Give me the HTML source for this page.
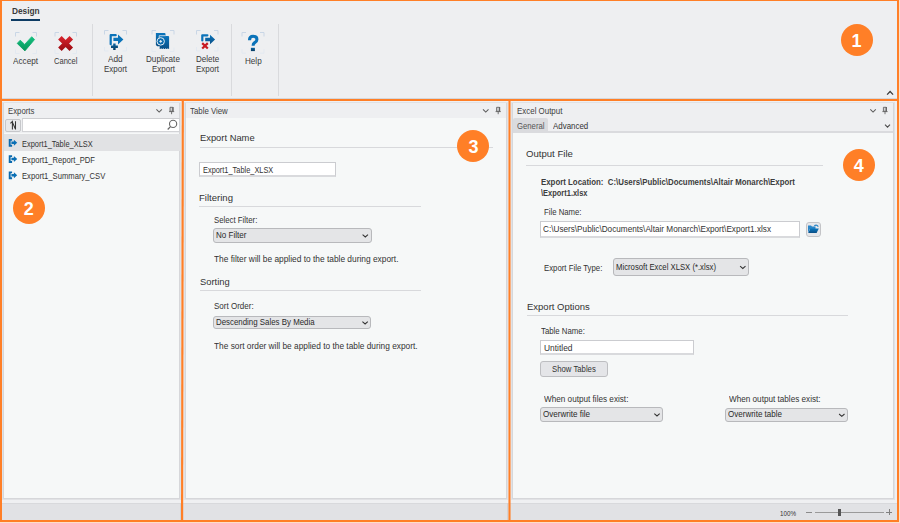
<!DOCTYPE html><html><head><meta charset="utf-8"><style>html,body{margin:0;padding:0;width:900px;height:523px;overflow:hidden;position:relative;font-family:"Liberation Sans",sans-serif;}</style></head><body>
<div style="position:absolute;left:0px;top:0px;width:900px;height:99px;background:#eeeff1;"></div>
<div style="position:absolute;left:0px;top:98px;width:900px;height:1px;background:#d5d6da;"></div>
<div style="position:absolute;left:11px;top:19px;width:29px;height:2px;background:#0d3b63;"></div>
<div style="position:absolute;left:92px;top:24px;width:1px;height:72px;background:#d9dadd;"></div>
<div style="position:absolute;left:231px;top:24px;width:1px;height:72px;background:#d9dadd;"></div>
<div style="position:absolute;left:278px;top:24px;width:1px;height:72px;background:#d9dadd;"></div>
<div style="position:absolute;left:0px;top:99px;width:900px;height:424px;background:#eff0f2;"></div>
<div style="position:absolute;left:0px;top:503px;width:900px;height:20px;background:#e1e2e5;"></div>
<div style="position:absolute;left:0px;top:503px;width:900px;height:1px;background:#d8d9dc;"></div>
<div style="position:absolute;left:180px;top:503px;width:1px;height:17px;background:#d2d3d6;"></div>
<div style="position:absolute;left:507px;top:503px;width:1px;height:17px;background:#d2d3d6;"></div>
<div style="position:absolute;left:2px;top:102px;width:179px;height:398px;background:#f6f8f8;box-sizing:border-box;border:1px solid #e1e2e5;box-shadow:inset 0 0 0 1px #d6d7da;"></div>
<div style="position:absolute;left:4px;top:103px;width:175px;height:15px;background:#eeeff1;"></div>
<div style="position:absolute;left:184px;top:102px;width:324px;height:398px;background:#f6f8f8;box-sizing:border-box;border:1px solid #e1e2e5;box-shadow:inset 0 0 0 1px #d6d7da;"></div>
<div style="position:absolute;left:186px;top:103px;width:320px;height:14.5px;background:#eeeff1;"></div>
<div style="position:absolute;left:511px;top:102px;width:384px;height:398px;background:#f6f8f8;box-sizing:border-box;border:1px solid #e1e2e5;box-shadow:inset 0 0 0 1px #d6d7da;"></div>
<div style="position:absolute;left:513px;top:103px;width:380px;height:15px;background:#eeeff1;"></div>
<div style="position:absolute;left:4px;top:117px;width:175px;height:16px;background:#eeeff1;"></div>
<div style="position:absolute;left:5px;top:119px;width:16px;height:12.5px;background:#e8e9eb;box-sizing:border-box;border:1px solid #c6c7ca;border-radius:2px;"></div>
<div style="position:absolute;left:22px;top:117.6px;width:158px;height:14.6px;background:#ffffff;box-sizing:border-box;border:1px solid #d2d3d6;border-top:1px solid #cdced1;"></div>
<div style="position:absolute;left:4px;top:134px;width:176px;height:17px;background:#e1e2e4;"></div>
<div style="position:absolute;left:199.6px;top:147px;width:293px;height:1px;background:#d8d9dc;"></div>
<div style="position:absolute;left:199px;top:162.4px;width:137px;height:15px;background:#ffffff;box-sizing:border-box;border:1px solid #cbccd0;border-bottom:2px solid #d9dadd;"></div>
<div style="position:absolute;left:199.3px;top:206.4px;width:221.3px;height:1px;background:#d8d9dc;"></div>
<div style="position:absolute;left:213.3px;top:228.2px;width:158.3px;height:14.600000000000023px;background:#e4e5e7;box-sizing:border-box;border:1px solid #b8b9bc;border-radius:3px;"></div>
<div style="position:absolute;left:199.7px;top:290.2px;width:221px;height:1px;background:#d8d9dc;"></div>
<div style="position:absolute;left:213px;top:315.8px;width:158.39999999999998px;height:13.399999999999977px;background:#e4e5e7;box-sizing:border-box;border:1px solid #b8b9bc;border-radius:3px;"></div>
<div style="position:absolute;left:513px;top:118px;width:380px;height:13px;background:#eeeff1;"></div>
<div style="position:absolute;left:513px;top:131px;width:380px;height:2px;background:#dadbde;"></div>
<div style="position:absolute;left:512.5px;top:118px;width:35.2px;height:14px;background:#dadbde;border-radius:2px 2px 0 0;"></div>
<div style="position:absolute;left:526.4px;top:165.3px;width:297px;height:1px;background:#d8d9dc;"></div>
<div style="position:absolute;left:540.3px;top:221px;width:259.4px;height:16.5px;background:#ffffff;box-sizing:border-box;border:1px solid #cbccd0;border-bottom:2px solid #d9dadd;"></div>
<div style="position:absolute;left:805.5px;top:222px;width:15.3px;height:14.7px;background:#e6e7ea;box-sizing:border-box;border:1px solid #c3c4c7;border-radius:3px;"></div>
<div style="position:absolute;left:612.5px;top:258.3px;width:136.89999999999998px;height:17.30000000000001px;background:#e4e5e7;box-sizing:border-box;border:1px solid #b8b9bc;border-radius:3px;"></div>
<div style="position:absolute;left:526.6px;top:315.3px;width:321.4px;height:1px;background:#d8d9dc;"></div>
<div style="position:absolute;left:540.1px;top:340px;width:153.8px;height:15.3px;background:#ffffff;box-sizing:border-box;border:1px solid #cbccd0;border-bottom:2px solid #d9dadd;"></div>
<div style="position:absolute;left:540.1px;top:361px;width:68.2px;height:15.9px;background:#e4e5e8;box-sizing:border-box;border:1px solid #bdbec1;border-radius:3px;"></div>
<div style="position:absolute;left:540px;top:407.2px;width:122.89999999999998px;height:14.5px;background:#e4e5e7;box-sizing:border-box;border:1px solid #b8b9bc;border-radius:3px;"></div>
<div style="position:absolute;left:725.2px;top:407.6px;width:122.39999999999998px;height:14.399999999999977px;background:#e4e5e7;box-sizing:border-box;border:1px solid #b8b9bc;border-radius:3px;"></div>
<div style="position:absolute;left:806.3px;top:512px;width:5.7px;height:1px;background:#8a8a8a;"></div>
<div style="position:absolute;left:815.2px;top:511.8px;width:68.4px;height:1px;background:#9a9a9a;"></div>
<div style="position:absolute;left:837.8px;top:508.7px;width:3.1px;height:7.3px;background:#555;"></div>
<div style="position:absolute;left:886.3px;top:511.7px;width:6.2px;height:1px;background:#808080;"></div>
<div style="position:absolute;left:888.9px;top:509px;width:1px;height:6.2px;background:#808080;"></div>
<div style="position:absolute;left:0px;top:522px;width:900px;height:1px;background:#fddfca;"></div>
<div style="position:absolute;left:899px;top:0px;width:1px;height:523px;background:#fddfca;"></div>
<svg style="position:absolute;left:0;top:0" width="900" height="523" viewBox="0 0 900 523"><defs><linearGradient id="gg" x1="0" y1="0" x2="0" y2="1"><stop offset="0" stop-color="#14c080"/><stop offset="1" stop-color="#07955a"/></linearGradient><linearGradient id="rg" x1="0" y1="0" x2="0" y2="1"><stop offset="0" stop-color="#d3222b"/><stop offset="1" stop-color="#a00d14"/></linearGradient><linearGradient id="bg" x1="0" y1="0" x2="0" y2="1"><stop offset="0" stop-color="#0b76bd"/><stop offset="1" stop-color="#0a4f86"/></linearGradient><linearGradient id="pg" x1="0" y1="0" x2="0" y2="1"><stop offset="0" stop-color="#0b67a6"/><stop offset="1" stop-color="#073b60"/></linearGradient></defs><path d="M15.5 36.5V32.5H19.5M32.5 32.5H36.5V36.5" stroke="#c9d6e6" fill="none" stroke-width="1"/><path d="M15.5 49.5V53.5H19.5M32.5 53.5H36.5V49.5" stroke="#e3e9f1" fill="none" stroke-width="1"/><path d="M17.2 43.4L20.2 40.2L24.7 44.4L31.7 36.7L34.6 39.5L24.9 50.9Z" fill="url(#gg)" stroke="url(#gg)" stroke-width="0.8" stroke-linejoin="round"/><path d="M55 36.5V32.5H59M72.5 32.5H76.5V36.5" stroke="#c9d6e6" fill="none" stroke-width="1"/><path d="M55 49.5V53.5H59M72.5 53.5H76.5V49.5" stroke="#e3e9f1" fill="none" stroke-width="1"/><path d="M59.9 37.8L71.3 49.2M71.3 37.8L59.9 49.2" stroke="url(#rg)" stroke-width="5" stroke-linecap="butt"/><path d="M104.5 34.5V30.5H108.5M122.5 30.5H126.5V34.5" stroke="#c9d6e6" fill="none" stroke-width="1"/><path d="M104.5 47V51H108.5M122.5 51H126.5V47" stroke="#e3e9f1" fill="none" stroke-width="1"/><path d="M115.7 35.2H110.7V44.2" stroke="#0b73b9" stroke-width="2.2" fill="none" stroke-linejoin="round" stroke-linecap="round"/><path d="M113.4 37.7H118V34.5L123.4 39.4L118 44.4V41H113.4Z" fill="#0b73b9"/><path d="M111 46.7H117.9M114.4 43.4V49.9" stroke="url(#pg)" stroke-width="2.4"/><path d="M152 34.5V30.5H156M170 30.5H174V34.5" stroke="#c9d6e6" fill="none" stroke-width="1"/><path d="M152 47.5V51.5H156M170 51.5H174V47.5" stroke="#e3e9f1" fill="none" stroke-width="1"/><path d="M155.9 32.9H164.5Q165.5 32.9 165.5 33.9V46.3H157.2L155.9 45Z" fill="url(#bg)"/><path d="M159.7 36H168.1Q169.1 36 169.1 37V48.9H159.7Z" fill="url(#bg)"/><path d="M159.2 38.2V35.7H165.6" stroke="#e8eef4" stroke-width="0.8" fill="none"/><path d="M160.6 48.7H169" stroke="#e8eef4" stroke-width="0.7" stroke-dasharray="1.2 1"/><circle cx="160.7" cy="41.4" r="3.7" fill="#0b6cae" stroke="#e8eef4" stroke-width="1"/><path d="M159.3 41.4H162.1M160.7 40V42.8" stroke="#e8eef4" stroke-width="1"/><path d="M196.5 34.5V30.5H200.5M214 30.5H218V34.5" stroke="#c9d6e6" fill="none" stroke-width="1"/><path d="M196.5 47V51H200.5M214 51H218V47" stroke="#e3e9f1" fill="none" stroke-width="1"/><path d="M207.4 35.3H202.3V40.4" stroke="#0b73b9" stroke-width="2.2" fill="none" stroke-linejoin="round" stroke-linecap="round"/><path d="M205.2 37.7H210V34.7L215.1 39.5L210 44.2V41.2H205.2Z" fill="url(#bg)"/><path d="M202.2 43.1L207.8 48.5M207.8 43.1L202.2 48.5" stroke="#c81b22" stroke-width="2.2"/><path d="M242 36.5V32.5H246M260 32.5H264V36.5" stroke="#c9d6e6" fill="none" stroke-width="1"/><path d="M242 49.2V53.2H246M260 53.2H264V49.2" stroke="#e3e9f1" fill="none" stroke-width="1"/><path d="M249.5 40.2C249.5 37.3 251 36.2 253.1 36.2C255.3 36.2 256.9 37.5 256.9 39.4C256.9 41.3 255.6 42 254.5 42.8C253.5 43.6 253.1 44.3 253.1 45.8" stroke="#0b73b9" stroke-width="3.1" fill="none"/><rect x="250.9" y="47.8" width="4" height="3.3" fill="url(#pg)"/><path d="M887.1 94.6L890.1 91.5L893.1 94.6" stroke="#3a3a3a" stroke-width="1.25" fill="none"/><path d="M156.4 109.3L159.15 112L161.9 109.3" stroke="#5c5c5c" stroke-width="1.05" fill="none"/><path d="M170.0 107.3H172.79999999999998V111.3H170.0Z M169.0 111.6H174.2 M171.6 111.6V114.2" stroke="#666" stroke-width="0.9" fill="#d0d1d4"/><rect x="172.39999999999998" y="107" width="1.2" height="4.6" fill="#666"/><path d="M483 109.3L485.75 112L488.5 109.3" stroke="#5c5c5c" stroke-width="1.05" fill="none"/><path d="M496.6 107.3H499.40000000000003V111.3H496.6Z M495.6 111.6H500.8 M498.2 111.6V114.2" stroke="#666" stroke-width="0.9" fill="#d0d1d4"/><rect x="499.0" y="107" width="1.2" height="4.6" fill="#666"/><path d="M870.3 109.3L873.05 112L875.8 109.3" stroke="#5c5c5c" stroke-width="1.05" fill="none"/><path d="M883.4 107.3H886.2V111.3H883.4Z M882.4 111.6H887.6 M885.0 111.6V114.2" stroke="#666" stroke-width="0.9" fill="#d0d1d4"/><rect x="885.8000000000001" y="107" width="1.2" height="4.6" fill="#666"/><path d="M10.4 123.4L12.4 121.4V129.5M12.6 122.6L15.3 128.8M15.5 121.2V129.5" stroke="#333" stroke-width="1.05" fill="none"/><circle cx="173.1" cy="123.9" r="3.6" stroke="#666" stroke-width="1.1" fill="none"/><path d="M170.5 126.6L167.7 129.5" stroke="#666" stroke-width="1.3"/><path d="M12.1 139.89999999999998H9.7V145.7H12.1" stroke="#0b6aad" stroke-width="1.9" fill="none"/><path d="M11.4 141.49999999999997H13.9V139.79999999999998L17.2 142.79999999999998L13.9 145.79999999999998V144.1H11.4Z" fill="#0b70b5"/><path d="M12.1 156.14999999999998H9.7V161.95H12.1" stroke="#0b6aad" stroke-width="1.9" fill="none"/><path d="M11.4 157.74999999999997H13.9V156.04999999999998L17.2 159.04999999999998L13.9 162.04999999999998V160.35H11.4Z" fill="#0b70b5"/><path d="M12.1 172.39999999999998H9.7V178.2H12.1" stroke="#0b6aad" stroke-width="1.9" fill="none"/><path d="M11.4 173.99999999999997H13.9V172.29999999999998L17.2 175.29999999999998L13.9 178.29999999999998V176.6H11.4Z" fill="#0b70b5"/><path d="M362.6 234.7L365.3 237.0L368.0 234.7" stroke="#333" stroke-width="1.05" fill="none"/><path d="M362.40000000000003 321.7L365.1 324.0L367.8 321.7" stroke="#333" stroke-width="1.05" fill="none"/><path d="M885 124.6L887.5 127.1L890 124.6" stroke="#4d4d4d" stroke-width="1.1" fill="none"/><path d="M808 232.8V225.6H811L812 226.6H815.5V229H810Z" fill="#2a86c8"/><path d="M808.2 233L810.3 228.6H818.8L816.6 233Z" fill="url(#bg)"/><path d="M814.3 225.8Q816.6 224.2 818.3 226.6" stroke="#2a86c8" stroke-width="1.2" fill="none"/><path d="M740.0999999999999 266.15000000000003L742.8 268.45000000000005L745.5 266.15000000000003" stroke="#333" stroke-width="1.05" fill="none"/><path d="M654.3 413.65L657 415.95L659.7 413.65" stroke="#333" stroke-width="1.05" fill="none"/><path d="M839.0999999999999 414.0L841.8 416.3L844.5 414.0" stroke="#333" stroke-width="1.05" fill="none"/></svg>
<span id="t0" style="position:absolute;left:11.5px;top:7.47px;font-size:8.3px;line-height:8.3px;font-weight:700;color:#3a3a3a;white-space:pre;transform-origin:0 0;transform:scaleX(1.0010);">Design</span>
<span id="t1" style="position:absolute;left:13.4px;top:57.12px;font-size:8.6px;line-height:8.6px;font-weight:400;color:#3a3a3a;white-space:pre;transform-origin:0 0;transform:scaleX(0.9512);">Accept</span>
<span id="t2" style="position:absolute;left:53.6px;top:57.12px;font-size:8.6px;line-height:8.6px;font-weight:400;color:#3a3a3a;white-space:pre;transform-origin:0 0;transform:scaleX(0.8780);">Cancel</span>
<span id="t3" style="position:absolute;left:108.4px;top:54.92px;font-size:8.6px;line-height:8.6px;font-weight:400;color:#3a3a3a;white-space:pre;transform-origin:0 0;transform:scaleX(0.9610);">Add</span>
<span id="t4" style="position:absolute;left:104.2px;top:64.72px;font-size:8.6px;line-height:8.6px;font-weight:400;color:#3a3a3a;white-space:pre;transform-origin:0 0;transform:scaleX(0.9298);">Export</span>
<span id="t5" style="position:absolute;left:145.8px;top:54.92px;font-size:8.6px;line-height:8.6px;font-weight:400;color:#3a3a3a;white-space:pre;transform-origin:0 0;transform:scaleX(0.9462);">Duplicate</span>
<span id="t6" style="position:absolute;left:151.6px;top:64.72px;font-size:8.6px;line-height:8.6px;font-weight:400;color:#3a3a3a;white-space:pre;transform-origin:0 0;transform:scaleX(0.9298);">Export</span>
<span id="t7" style="position:absolute;left:195.7px;top:54.92px;font-size:8.6px;line-height:8.6px;font-weight:400;color:#3a3a3a;white-space:pre;transform-origin:0 0;transform:scaleX(0.9338);">Delete</span>
<span id="t8" style="position:absolute;left:196.2px;top:64.72px;font-size:8.6px;line-height:8.6px;font-weight:400;color:#3a3a3a;white-space:pre;transform-origin:0 0;transform:scaleX(0.9298);">Export</span>
<span id="t9" style="position:absolute;left:244.9px;top:57.32px;font-size:8.6px;line-height:8.6px;font-weight:400;color:#3a3a3a;white-space:pre;transform-origin:0 0;transform:scaleX(0.9442);">Help</span>
<span id="t10" style="position:absolute;left:7.8px;top:106.58px;font-size:9.0px;line-height:9.0px;font-weight:400;color:#404040;white-space:pre;transform-origin:0 0;transform:scaleX(0.8651);">Exports</span>
<span id="t11" style="position:absolute;left:189.9px;top:106.58px;font-size:9.0px;line-height:9.0px;font-weight:400;color:#404040;white-space:pre;transform-origin:0 0;transform:scaleX(0.8715);">Table View</span>
<span id="t12" style="position:absolute;left:516.5px;top:106.58px;font-size:9.0px;line-height:9.0px;font-weight:400;color:#404040;white-space:pre;transform-origin:0 0;transform:scaleX(0.8810);">Excel Output</span>
<span id="t13" style="position:absolute;left:22px;top:139.58px;font-size:9.0px;line-height:9.0px;font-weight:400;color:#333;white-space:pre;transform-origin:0 0;transform:scaleX(0.8263);">Export1_Table_XLSX</span>
<span id="t14" style="position:absolute;left:22px;top:155.83px;font-size:9.0px;line-height:9.0px;font-weight:400;color:#333;white-space:pre;transform-origin:0 0;transform:scaleX(0.8472);">Export1_Report_PDF</span>
<span id="t15" style="position:absolute;left:22px;top:172.08px;font-size:9.0px;line-height:9.0px;font-weight:400;color:#333;white-space:pre;transform-origin:0 0;transform:scaleX(0.8496);">Export1_Summary_CSV</span>
<span id="t16" style="position:absolute;left:199.6px;top:133.27px;font-size:9.6px;line-height:9.6px;font-weight:400;color:#333;white-space:pre;transform-origin:0 0;transform:scaleX(0.9753);">Export Name</span>
<span id="t17" style="position:absolute;left:203px;top:166.08px;font-size:9.0px;line-height:9.0px;font-weight:400;color:#333;white-space:pre;transform-origin:0 0;transform:scaleX(0.8216);">Export1_Table_XLSX</span>
<span id="t18" style="position:absolute;left:199.3px;top:193.07px;font-size:9.6px;line-height:9.6px;font-weight:400;color:#333;white-space:pre;transform-origin:0 0;transform:scaleX(0.9963);">Filtering</span>
<span id="t19" style="position:absolute;left:213.8px;top:216.08px;font-size:9.0px;line-height:9.0px;font-weight:400;color:#333;white-space:pre;transform-origin:0 0;transform:scaleX(0.8657);">Select Filter:</span>
<span id="t20" style="position:absolute;left:216.3px;top:231.18px;font-size:9.0px;line-height:9.0px;font-weight:400;color:#2a2a2a;white-space:pre;transform-origin:0 0;transform:scaleX(0.8966);">No Filter</span>
<span id="t21" style="position:absolute;left:213.8px;top:255.18px;font-size:9.0px;line-height:9.0px;font-weight:400;color:#333;white-space:pre;transform-origin:0 0;transform:scaleX(0.9289);">The filter will be applied to the table during export.</span>
<span id="t22" style="position:absolute;left:199.7px;top:276.67px;font-size:9.6px;line-height:9.6px;font-weight:400;color:#333;white-space:pre;transform-origin:0 0;transform:scaleX(0.9768);">Sorting</span>
<span id="t23" style="position:absolute;left:213.6px;top:302.28px;font-size:9.0px;line-height:9.0px;font-weight:400;color:#333;white-space:pre;transform-origin:0 0;transform:scaleX(0.8918);">Sort Order:</span>
<span id="t24" style="position:absolute;left:216px;top:318.18px;font-size:9.0px;line-height:9.0px;font-weight:400;color:#2a2a2a;white-space:pre;transform-origin:0 0;transform:scaleX(0.8760);">Descending Sales By Media</span>
<span id="t25" style="position:absolute;left:213.6px;top:342.08px;font-size:9.0px;line-height:9.0px;font-weight:400;color:#333;white-space:pre;transform-origin:0 0;transform:scaleX(0.9249);">The sort order will be applied to the table during export.</span>
<span id="t26" style="position:absolute;left:516.5px;top:122.28px;font-size:9.0px;line-height:9.0px;font-weight:400;color:#555;white-space:pre;transform-origin:0 0;transform:scaleX(0.8585);">General</span>
<span id="t27" style="position:absolute;left:552.7px;top:122.28px;font-size:9.0px;line-height:9.0px;font-weight:400;color:#333;white-space:pre;transform-origin:0 0;transform:scaleX(0.8793);">Advanced</span>
<span id="t28" style="position:absolute;left:526.4px;top:148.67px;font-size:9.6px;line-height:9.6px;font-weight:400;color:#333;white-space:pre;transform-origin:0 0;transform:scaleX(0.9992);">Output File</span>
<span id="t29" style="position:absolute;left:540.8px;top:178.96px;font-size:8.2px;line-height:8.2px;font-weight:700;color:#3d3d3d;white-space:pre;transform-origin:0 0;transform:scaleX(0.9593);">Export Location:  C:\Users\Public\Documents\Altair Monarch\Export</span>
<span id="t30" style="position:absolute;left:540.8px;top:190.06px;font-size:8.2px;line-height:8.2px;font-weight:700;color:#3d3d3d;white-space:pre;transform-origin:0 0;transform:scaleX(0.9123);">\Export1.xlsx</span>
<span id="t31" style="position:absolute;left:543.7px;top:207.88px;font-size:9.0px;line-height:9.0px;font-weight:400;color:#333;white-space:pre;transform-origin:0 0;transform:scaleX(0.8618);">File Name:</span>
<span id="t32" style="position:absolute;left:543.3px;top:224.58px;font-size:9.0px;line-height:9.0px;font-weight:400;color:#333;white-space:pre;transform-origin:0 0;transform:scaleX(0.9098);">C:\Users\Public\Documents\Altair Monarch\Export\Export1.xlsx</span>
<span id="t33" style="position:absolute;left:543.9px;top:264.18px;font-size:9.0px;line-height:9.0px;font-weight:400;color:#333;white-space:pre;transform-origin:0 0;transform:scaleX(0.8653);">Export File Type:</span>
<span id="t34" style="position:absolute;left:615.5px;top:262.63px;font-size:9.0px;line-height:9.0px;font-weight:400;color:#2a2a2a;white-space:pre;transform-origin:0 0;transform:scaleX(0.8581);">Microsoft Excel XLSX (*.xlsx)</span>
<span id="t35" style="position:absolute;left:526.6px;top:302.47px;font-size:9.6px;line-height:9.6px;font-weight:400;color:#333;white-space:pre;transform-origin:0 0;transform:scaleX(0.9895);">Export Options</span>
<span id="t36" style="position:absolute;left:541.2px;top:327.28px;font-size:9.0px;line-height:9.0px;font-weight:400;color:#333;white-space:pre;transform-origin:0 0;transform:scaleX(0.8668);">Table Name:</span>
<span id="t37" style="position:absolute;left:543.9px;top:343.88px;font-size:9.0px;line-height:9.0px;font-weight:400;color:#333;white-space:pre;transform-origin:0 0;transform:scaleX(0.9339);">Untitled</span>
<span id="t38" style="position:absolute;left:552.3px;top:365.08px;font-size:9.0px;line-height:9.0px;font-weight:400;color:#333;white-space:pre;transform-origin:0 0;transform:scaleX(0.8609);">Show Tables</span>
<span id="t39" style="position:absolute;left:543.8px;top:394.58px;font-size:9.0px;line-height:9.0px;font-weight:400;color:#333;white-space:pre;transform-origin:0 0;transform:scaleX(0.9071);">When output files exist:</span>
<span id="t40" style="position:absolute;left:543px;top:410.13px;font-size:9.0px;line-height:9.0px;font-weight:400;color:#2a2a2a;white-space:pre;transform-origin:0 0;transform:scaleX(0.8950);">Overwrite file</span>
<span id="t41" style="position:absolute;left:728.6px;top:394.78px;font-size:9.0px;line-height:9.0px;font-weight:400;color:#333;white-space:pre;transform-origin:0 0;transform:scaleX(0.9064);">When output tables exist:</span>
<span id="t42" style="position:absolute;left:728.2px;top:410.48px;font-size:9.0px;line-height:9.0px;font-weight:400;color:#2a2a2a;white-space:pre;transform-origin:0 0;transform:scaleX(0.8921);">Overwrite table</span>
<span id="t43" style="position:absolute;left:779.9px;top:509.81px;font-size:7.2px;line-height:7.2px;font-weight:400;color:#333;white-space:pre;transform-origin:0 0;transform:scaleX(0.8700);">100%</span>
<svg style="position:absolute;left:0;top:0" width="900" height="523" viewBox="0 0 900 523" shape-rendering="crispEdges"><rect x="0" y="0" width="899" height="1.3" fill="#ff7f27"/><rect x="0" y="0" width="1.7" height="522" fill="#ff7f27"/><rect x="897" y="0" width="2" height="522" fill="#ff7f27"/><rect x="0" y="99" width="899" height="2" fill="#ff7f27"/><rect x="0" y="520" width="899" height="2" fill="#ff7f27"/></svg><svg style="position:absolute;left:0;top:0" width="900" height="523" viewBox="0 0 900 523"><path d="M182.8 100L182.1 521" stroke="#ff7f27" stroke-width="2.2"/><path d="M509.5 100L509.5 521" stroke="#ff7f27" stroke-width="2.1"/></svg>
<div style="position:absolute;left:840.5px;top:23.799999999999997px;width:32px;height:32px;border-radius:50%;background:#ff7f27;"></div>
<div style="position:absolute;left:840.5px;top:31.799999999999997px;width:32px;text-align:center;font-size:18px;line-height:18px;font-weight:700;color:#fff;">1</div>
<div style="position:absolute;left:12.7px;top:192.1px;width:32px;height:32px;border-radius:50%;background:#ff7f27;"></div>
<div style="position:absolute;left:12.7px;top:200.1px;width:32px;text-align:center;font-size:18px;line-height:18px;font-weight:700;color:#fff;">2</div>
<div style="position:absolute;left:457.4px;top:130px;width:32px;height:32px;border-radius:50%;background:#ff7f27;"></div>
<div style="position:absolute;left:457.4px;top:138.0px;width:32px;text-align:center;font-size:18px;line-height:18px;font-weight:700;color:#fff;">3</div>
<div style="position:absolute;left:842.8px;top:148.6px;width:32px;height:32px;border-radius:50%;background:#ff7f27;"></div>
<div style="position:absolute;left:842.8px;top:156.6px;width:32px;text-align:center;font-size:18px;line-height:18px;font-weight:700;color:#fff;">4</div>
</body></html>
